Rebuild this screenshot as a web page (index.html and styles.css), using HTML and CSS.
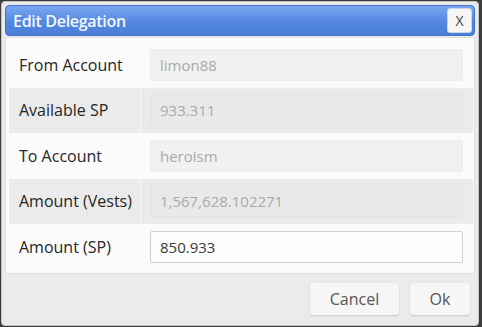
FILE: index.html
```html
<!DOCTYPE html>
<html lang="en">
<head>
  <meta charset="UTF-8" />
  <title>Edit Delegation</title>
  <link rel="stylesheet" href="styles.css">
</head>
<body>
  <div class="dialog">
    <div class="title-bar">
      <span class="title">Edit Delegation</span>
      <button class="close-btn">X</button>
    </div>

    <div class="content">
      <div class="row">
        <label class="row-label">From Account</label>
        <div class="row-field"><input class="field" value="limon88" disabled></div>
      </div>
      <div class="row alt">
        <label class="row-label">Available SP</label>
        <div class="row-field"><input class="field" value="933.311" disabled></div>
      </div>
      <div class="row">
        <label class="row-label">To Account</label>
        <div class="row-field"><input class="field" value="heroism" disabled></div>
      </div>
      <div class="row alt">
        <label class="row-label">Amount (Vests)</label>
        <div class="row-field"><input class="field" value="1,567,628.102271" disabled></div>
      </div>
      <div class="row">
        <label class="row-label">Amount (SP)</label>
        <div class="row-field"><input class="field editable" value="850.933"></div>
      </div>
    </div>

    <div class="footer">
      <button class="btn btn-cancel">Cancel</button>
      <button class="btn btn-ok">Ok</button>
    </div>
  </div>
</body>
</html>
```

FILE: styles.css
```css
* { margin: 0; padding: 0; box-sizing: border-box; }

html, body {
  height: 100%;
  font-family: 'Open Sans', 'Noto Sans', sans-serif;
  background: #3c3c3c;
  overflow: hidden;
}

body { padding: 1px 3px 1px 1px; }

.dialog {
  width: 478px;
  height: 325px;
  background: #ebebeb;
  border: 1px solid #c4c4c4;
  border-radius: 4px;
  padding: 3px 3px 0;
  display: flex;
  flex-direction: column;
}

.title-bar {
  height: 31px;
  display: flex;
  align-items: center;
  justify-content: space-between;
  padding: 0 2px 0 7px;
  border: 1px solid #4273c9;
  border-radius: 4px;
  background: linear-gradient(#7aa8f0, #5387e0 55%, #4a7ed7);
}

.title {
  color: #f4f8ff;
  font-size: 16px;
  font-weight: 600;
  letter-spacing: -0.3px;
}

.close-btn {
  width: 25px;
  height: 25px;
  border: 1px solid #c9d4e6;
  border-radius: 3px;
  background: #f6f6f6;
  color: #444;
  font-family: 'Open Sans', sans-serif;
  font-size: 14px;
}

.content {
  margin-top: 1px;
  background: #fbfbfb;
  border: 1px solid #dedede;
  border-radius: 3px;
  padding: 4px 1px 3px 3px;
}

.row {
  display: flex;
  height: 45.5px;
}
.row.alt { background: #ebebeb; }

.row-label {
  width: 132px;
  padding-left: 10px;
  display: flex;
  align-items: center;
  font-size: 16px;
  color: #262626;
  border-right: 1px solid #f8f8f8;
}

.row-field {
  flex: 1;
  display: flex;
  align-items: center;
  padding: 0 10px 0 9px;
}

.field {
  width: 100%;
  height: 32px;
  padding: 0 9px;
  border: 1px solid #ececec;
  border-radius: 2px;
  background: #f1f1f1;
  color: #a9a9a9;
  font-family: 'Open Sans', sans-serif;
  font-size: 15px;
}
.row.alt .field { background: #e9e9e9; border-color: #e4e4e4; }

.field.editable {
  background: #fdfdfd;
  border-color: #cfcfcf;
  color: #3a3a3a;
}

.footer {
  flex: 1;
  display: flex;
  justify-content: flex-end;
  align-items: center;
  gap: 11px;
  padding: 0 5px 0 0;
}

.btn {
  height: 32px;
  border: none;
  border-radius: 3px;
  background: #f6f6f6;
  box-shadow: 0 1px 2px rgba(0,0,0,0.15);
  color: #555;
  font-family: 'Open Sans', sans-serif;
  font-size: 16px;
}
.btn-cancel { width: 89px; }
.btn-ok { width: 60px; }
```
